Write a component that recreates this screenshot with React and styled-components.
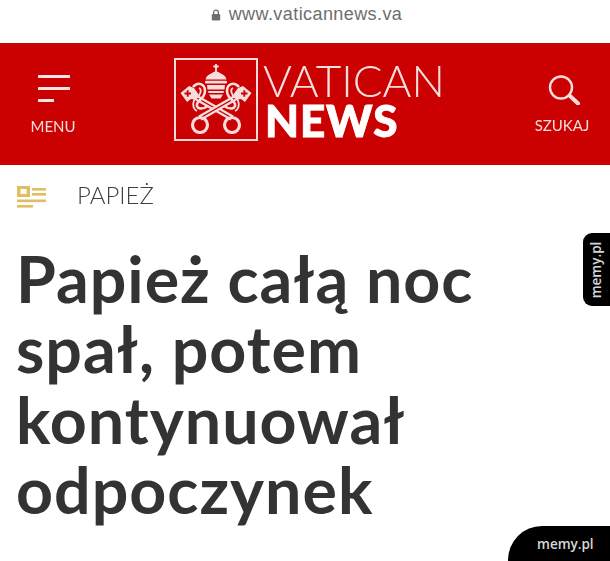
import React from "react";
import styled, { createGlobalStyle } from "styled-components";

const Global = createGlobalStyle`
  html, body { margin: 0; padding: 0; background: #fff; }
  #root { width: 610px; height: 561px; overflow: hidden; }
`;

const Page = styled.div`
  position: relative;
  width: 610px;
  height: 561px;
  overflow: hidden;
  display: flex;
  flex-direction: column;
  font-family: Lato, "Liberation Sans", sans-serif;
  background: #fff;
`;

const UrlBar = styled.div`
  height: 43px;
  box-sizing: border-box;
  padding-bottom: 14px;
  padding-left: 3px;
  display: flex;
  align-items: center;
  justify-content: center;
  gap: 8px;
  color: #6e6e70;
  font-family: "Liberation Sans", Arial, sans-serif;
  font-size: 18px;
  letter-spacing: 0.42px;
`;

const Header = styled.header`
  height: 122px;
  flex: none;
  background: #cb0000;
  box-shadow: inset 0 1px 0 #b90f12;
  display: flex;
  align-items: flex-start;
  justify-content: space-between;
  padding: 15px 20px 0 31px;
  box-sizing: border-box;
  color: #f6dcdc;
`;

const NavItem = styled.div`
  width: ${(p) => p.$w}px;
  display: flex;
  flex-direction: column;
  align-items: center;
  font-size: 15px;
  font-weight: 400;
  line-height: 18px;
  gap: ${(p) => p.$gap}px;
  padding-top: ${(p) => p.$top}px;
  filter: blur(0.3px);
`;

const Brand = styled.div`
  display: flex;
  gap: 5px;
  margin-left: 10px;
`;

const LogoBox = styled.div`
  width: 84px;
  height: 83px;
  box-sizing: border-box;
  border: 2px solid #f5dcdc;
  display: flex;
  align-items: center;
  justify-content: center;
`;

const Wordmark = styled.div`
  display: flex;
  flex-direction: column;
  color: #fff;
  filter: blur(0.3px);
`;

const Vatican = styled.div`
  font-size: 44.2px;
  line-height: 44px;
  font-weight: 300;
  color: #f7dede;
`;

const News = styled.div`
  font-size: 44px;
  line-height: 38px;
  font-weight: 900;
  letter-spacing: 0.9px;
  -webkit-text-stroke: 0.9px #fff;
  margin-left: 2px;
  margin-top: -1px;
`;

const Crumb = styled.div`
  height: 60px;
  flex: none;
  display: flex;
  align-items: center;
  padding: 0 0 1px 17px;
  box-sizing: border-box;
  gap: 31px;
  color: #3f3f41;
  font-size: 24px;
  font-weight: 300;
  filter: blur(0.25px);
`;

const Title = styled.h1`
  margin: 0;
  padding: 18px 0 0 16px;
  font-size: 64.5px;
  line-height: 70.3px;
  font-weight: 700;
  letter-spacing: 1px;
  color: #333335;
  width: 480px;
  filter: blur(0.3px);
`;

const SideTab = styled.div`
  position: absolute;
  right: 0;
  top: 233px;
  width: 27px;
  height: 73px;
  background: #000;
  border-radius: 9px 0 0 9px;
  color: #d6d6d6;
  display: flex;
  align-items: center;
  justify-content: center;
`;

const SideLabel = styled.span`
  transform: rotate(-90deg);
  font-family: "Open Sans", sans-serif;
  font-size: 13.5px;
  font-weight: 600;
  white-space: nowrap;
`;

const CornerTab = styled.div`
  position: absolute;
  right: 0;
  bottom: 0;
  width: 102px;
  height: 35px;
  background: #000;
  border-top-left-radius: 34px;
  color: #d8d8d8;
  font-family: "Open Sans", sans-serif;
  font-size: 13.5px;
  font-weight: 600;
  box-sizing: border-box;
  padding: 9px 0 0 29px;
  line-height: 18px;
`;

const Lock = () => (
  <svg width="10" height="12" viewBox="0 0 10 12" aria-hidden="true">
    <path d="M2.6 5V3.6a2.4 2.4 0 0 1 4.8 0V5" fill="none" stroke="#6e6e70" strokeWidth="1.3" />
    <rect x="0.8" y="5" width="8.4" height="6.4" rx="1.2" fill="#6e6e70" />
  </svg>
);

const Burger = () => (
  <svg width="34" height="28" viewBox="0 0 34 28" aria-hidden="true" style={{ marginLeft: 2 }}>
    <g fill="#f8e4e4">
      <rect x="1" y="0" width="32" height="3" rx="0.5" />
      <rect x="1" y="12" width="32" height="3" rx="0.5" />
      <rect x="1" y="24" width="16" height="3" rx="0.5" />
    </g>
  </svg>
);

const Search = () => (
  <svg width="34" height="30" viewBox="0 0 34 30" aria-hidden="true" fill="none" stroke="#f8dcdc" style={{ marginLeft: 6 }}>
    <circle cx="13" cy="12.5" r="11" strokeWidth="2.4" />
    <path d="M21.5 20.5 L30 28.5" strokeWidth="4" strokeLinecap="round" />
  </svg>
);

const Paper = () => (
  <svg width="29" height="25" viewBox="0 0 29 25" aria-hidden="true" style={{ filter: "blur(0.3px)", marginTop: 8 }}>
    <g fill="#e2bd62">
      <path d="M0 0h13v11H0zM3.5 3v5h6V3z" fillRule="evenodd" />
      <rect x="15" y="2" width="14" height="2.6" />
      <rect x="15" y="7" width="14" height="2.6" />
      <rect x="0" y="13.5" width="29" height="2.6" />
      <rect x="0" y="19" width="16" height="2.6" />
    </g>
  </svg>
);

const Key = ({ flip }) => (
  <g transform={flip ? "translate(90 0) scale(-1 1)" : undefined}>
    <path d="M26 43 L61 63" stroke="#f6dede" strokeWidth="6" fill="none" />
    <path d="M26 43 L61 63" stroke="#cb0000" strokeWidth="1.4" fill="none" />
    <circle cx="61" cy="70" r="7.5" fill="none" stroke="#f6dede" strokeWidth="3.2" />
    <path d="M9.5 38 L18 31 L23 33 L28 40 L25 45 L20 44 L16 47 Z" fill="#f6dede" />
    <path d="M13.5 38.5 L20 38.5 M16.7 35.3 L16.7 41.7" stroke="#cb0000" strokeWidth="1.8" />
    <path d="M22 32 C27 26 34 29 34 36 C34 43 28 44 26 49 C25 54 31 55 37 51" fill="none" stroke="#f6dede" strokeWidth="2.6" />
    <path d="M28 33 C31 34 30 40 26 42 C21 46 21 53 26 56" fill="none" stroke="#f6dede" strokeWidth="1.8" />
  </g>
);

const Emblem = () => (
  <svg width="80" height="79" viewBox="5 5 80 79" aria-hidden="true" style={{ filter: "blur(0.25px)" }}>
    <Key />
    <Key flip />
    <g fill="#f6dede">
      <path d="M45 9 v7 M42.3 11.5 h5.4" stroke="#f6dede" strokeWidth="1.8" />
      <path d="M34.5 24.5 C35.5 19 41 19 45 15.5 C49 19 54.5 19 55.5 24.5 Z" />
      <rect x="34" y="25.8" width="22" height="2.8" rx="1" />
      <path d="M36 30 H54 L53.5 34.5 H36.5 Z" />
      <path d="M37 36 H53 L52.5 38 H37.5 Z" />
      <path d="M38 39.5 H52 L49.5 43.5 H40.5 Z" />
    </g>
  </svg>
);

export default function App() {
  return (
    <Page>
      <Global />
      <UrlBar>
        <Lock />
        www.vaticannews.va
      </UrlBar>
      <Header>
        <NavItem $w={44} $top={17} $gap={14}>
          <Burger />
          MENU
        </NavItem>
        <Brand>
          <LogoBox>
            <Emblem />
          </LogoBox>
          <Wordmark>
            <Vatican>VATICAN</Vatican>
            <News>NEWS</News>
          </Wordmark>
        </Brand>
        <NavItem $w={56} $top={17} $gap={11}>
          <Search />
          SZUKAJ
        </NavItem>
      </Header>
      <Crumb>
        <Paper />
        PAPIEŻ
      </Crumb>
      <Title>Papież całą noc spał, potem kontynuował odpoczynek</Title>
      <SideTab>
        <SideLabel>memy.pl</SideLabel>
      </SideTab>
      <CornerTab>memy.pl</CornerTab>
    </Page>
  );
}
